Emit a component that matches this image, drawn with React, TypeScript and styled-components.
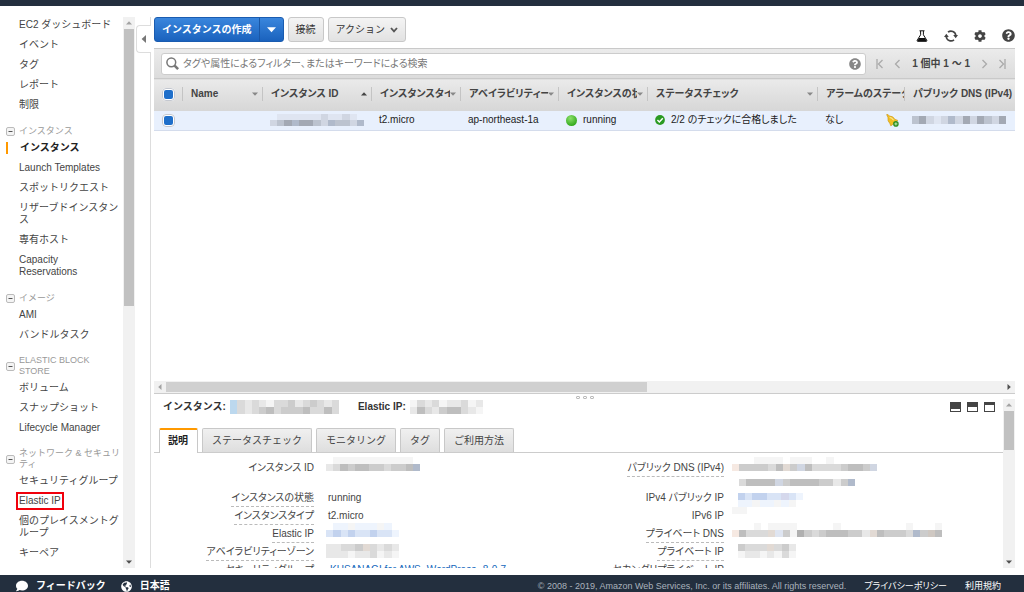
import React from "react";
import styled, { createGlobalStyle, css } from "styled-components";
import { FaCog, FaComment, FaGlobeAmericas, FaQuestionCircle } from "react-icons/fa";

const GlobalStyle = createGlobalStyle`
  *, *::before, *::after { box-sizing: border-box; }
  body {
    margin: 0;
    background: #fff;
    color: #444;
    font: 10px/12px "Liberation Sans", "Noto Sans CJK JP", sans-serif;
  }
  button, input { font: inherit; color: inherit; margin: 0; }
  button { padding: 0; background: none; border: 0; cursor: pointer; }
  a { color: inherit; text-decoration: none; }
  ul, dl, dd { margin: 0; padding: 0; list-style: none; }
  svg { display: block; flex: none; }
`;

const Page = styled.div`
  display: flex;
  flex-direction: column;
  height: 100vh;
  overflow: hidden;
`;
const TopBar = styled.header`
  flex: none;
  height: 6px;
  background: #232f3e;
`;
const Body = styled.div`
  flex: 1;
  min-height: 0;
  display: flex;
  padding: 11px 9px 7px 0;
`;

/* Scroll bars */
const Bar = styled.div<{ $row?: boolean }>`
  display: flex;
  flex: none;
  flex-direction: ${(p) => (p.$row ? "row" : "column")};
  ${(p) => (p.$row ? "height: 12px;" : "width: 12px;")}
  background: #f1f1f1;
`;
const BarArrow = styled.button`
  flex: none;
  width: 12px;
  height: 12px;
  display: grid;
  place-items: center;
`;
const BarPart = styled.div<{ $grow: number; $thumb?: boolean; $row?: boolean }>`
  flex: ${(p) => p.$grow} 1 0;
  ${(p) => p.$thumb && (p.$row ? "margin: 1px 0; background: #d0d0d0;" : "margin: 0 1px; background: #c1c1c1;")}
`;
const Triangle = ({ turn = 0, color = "#555", w = 6 }: { turn?: number; color?: string; w?: number }) => (
  <svg width={w} height={w} viewBox="0 0 6 6">
    <path d="M0 1.5h6L3 4.8z" fill={color} transform={`rotate(${turn} 3 3)`} />
  </svg>
);
const ScrollBar = ({ thumb, rest, row }: { thumb: number; rest: number; row?: boolean }) => (
  <Bar $row={row}>
    <BarArrow aria-label="前へ">
      <Triangle turn={row ? 90 : 180} color="#a3a3a3" />
    </BarArrow>
    <BarPart $grow={thumb} $thumb $row={row} />
    <BarPart $grow={rest} />
    <BarArrow aria-label="次へ">
      <Triangle turn={row ? -90 : 0} color="#505050" />
    </BarArrow>
  </Bar>
);

/* Side navigation */
const Side = styled.nav`
  flex: none;
  display: flex;
  width: 135px;
`;
const SideScroll = styled.div`
  flex: 1;
  overflow: hidden;
  padding-top: 2px;
`;
const NavList = styled.ul`
  display: flex;
  flex-direction: column;
  gap: 8px;
`;
const NavItem = styled.li<{ $active?: boolean }>`
  display: flex;
  padding-left: 19px;
  white-space: pre;
  ${(p) =>
    p.$active &&
    css`
      margin-left: 6px;
      padding-left: 12px;
      border-left: 2px solid #f90;
      font-weight: bold;
      color: #222;
    `}
`;
const NavLink = styled.a<{ $marked?: boolean }>`
  ${(p) => p.$marked && "outline: 2px solid #f0000c; outline-offset: 1px;"}
`;
const GroupHead = styled.button`
  display: flex;
  align-items: center;
  gap: 4px;
  min-height: 12px;
  margin: 14px 0 5px;
  padding-left: 6px;
  font-size: 9px;
  line-height: 11px;
  text-align: left;
  white-space: pre;
  color: #999;
`;
const Minus = () => (
  <svg width="9" height="9" viewBox="0 0 9 9">
    <rect x=".5" y=".5" width="8" height="8" rx="1.5" fill="#f4f4f4" stroke="#bbb" />
    <path d="M2.5 4.5h4" stroke="#555" />
  </svg>
);

type Group = { head?: string; items: string[] };
const groups: Group[] = [
  { items: ["EC2 ダッシュボード", "イベント", "タグ", "レポート", "制限"] },
  {
    head: "インスタンス",
    items: ["インスタンス", "Launch Templates", "スポットリクエスト", "リザーブドインスタン\nス", "専有ホスト", "Capacity\nReservations"],
  },
  { head: "イメージ", items: ["AMI", "バンドルタスク"] },
  { head: "ELASTIC BLOCK\nSTORE", items: ["ボリューム", "スナップショット", "Lifecycle Manager"] },
  {
    head: "ネットワーク & セキュリ\nティ",
    items: ["セキュリティグループ", "Elastic IP", "個のプレイスメントグ\nループ", "キーペア"],
  },
];

/* Handle that folds the side navigation */
const Fold = styled.div`
  flex: none;
  display: flex;
  flex-direction: column;
  width: 16px;
`;
const FoldLine = styled.div<{ $short?: boolean }>`
  flex: ${(p) => (p.$short ? "0 0 8px" : "1")};
  border-right: 1px solid #ddd;
`;
const FoldButton = styled.button`
  flex: none;
  height: 28px;
  margin-left: 1px;
  border: 1px solid #ddd;
  border-right: 0;
  border-radius: 4px 0 0 4px;
  display: grid;
  place-items: center;
`;

/* Main column */
const Main = styled.main`
  flex: 1;
  min-width: 0;
  display: flex;
  flex-direction: column;
  padding-left: 3px;
`;
const Toolbar = styled.div`
  flex: none;
  display: flex;
  align-items: flex-start;
  gap: 4px;
  height: 31px;
`;
const PrimaryGroup = styled.div`
  display: flex;
  height: 25px;
  border: 1px solid #1a5cb0;
  border-radius: 3px;
  background: linear-gradient(#3a86dd, #1a62bd);
`;
const PrimaryButton = styled.button`
  display: flex;
  align-items: center;
  padding: 0 7px;
  color: #fff;
  font-weight: bold;
  & + & {
    border-left: 1px solid #1a57a6;
  }
`;
const PlainButton = styled.button`
  display: flex;
  align-items: center;
  gap: 5px;
  height: 25px;
  padding: 0 7px;
  border: 1px solid #c8c8c8;
  border-radius: 3px;
  background: linear-gradient(#f4f4f4, #e2e2e2);
  color: #333;
`;
const Tools = styled.div`
  display: flex;
  align-items: center;
  gap: 16px;
  margin-left: auto;
  padding-top: 12px;
`;
const ToolButton = styled.button`
  display: grid;
  place-items: center;
  width: 13px;
  height: 13px;
  color: #444;
`;
const FilterBar = styled.div`
  flex: none;
  display: flex;
  align-items: center;
  height: 30px;
  padding: 0 9px 0 7px;
  border-top: 1px solid #c9c9c9;
  background: linear-gradient(#ebebeb, #dcdcdc);
`;
const SearchBox = styled.label`
  flex: 1;
  display: flex;
  align-items: center;
  gap: 4px;
  height: 22px;
  padding: 0 4px;
  border: 1px solid #ccc;
  border-radius: 3px;
  background: #fff;
  color: #888;
  input {
    flex: 1;
    min-width: 0;
    padding: 0;
    border: 0;
    outline: 0;
    font-feature-settings: "palt";
  }
  input::placeholder { color: #777; }
`;
const Pager = styled.div`
  display: flex;
  align-items: center;
  gap: 11px;
  margin-left: 10px;
  font-weight: bold;
  color: #444;
`;

const Table = styled.table`
  flex: none;
  width: 100%;
  table-layout: fixed;
  border-collapse: collapse;
  font-feature-settings: "palt";
  color: #222;
`;
const Col = styled.col<{ $w?: number }>`
  ${(p) => p.$w && `width: ${p.$w}px;`}
`;
const Th = styled.th`
  height: 32px;
  padding: 0 0 1px;
  border-top: 1px solid #c9c9c9;
  background: linear-gradient(#eaeaea, #d6d6d6);
  text-align: left;
  color: #444;
`;
const HeadCell = styled.div<{ $first?: boolean; $sorted?: boolean }>`
  display: flex;
  align-items: center;
  height: 14px;
  padding: 0 ${(p) => (p.$sorted ? "4px" : "0")} 0 8px;
  ${(p) => !p.$first && "border-left: 1px solid #c4c4c4;"}
`;
const HeadLabel = styled.span`
  flex: 1;
  overflow: hidden;
  white-space: nowrap;
`;
const Td = styled.td`
  height: 20px;
  padding: 0;
  border-bottom: 1px solid #d4dcec;
  background: #e8f0fd;
`;
const Cell = styled.div`
  display: flex;
  align-items: center;
  gap: 6px;
  padding-left: 8px;
  white-space: nowrap;
`;
const CellEnd = styled.span`
  margin-left: auto;
  padding-right: 5px;
`;
const Check = styled.input`
  appearance: none;
  display: block;
  width: 13px;
  height: 13px;
  border: 2px solid #fff;
  border-radius: 4px;
  outline: 1px solid #c4c8d0;
  outline-offset: -1px;
  background: #1f6fca;
`;
const Empty = styled.div`
  flex: 1;
`;

/* Lower pane */
const Pane = styled.section`
  flex: none;
  display: flex;
  flex-direction: column;
  height: 175px;
  border-top: 1px solid #ccc;
`;
const Grips = styled.div`
  flex: none;
  display: flex;
  justify-content: center;
  align-items: flex-end;
  gap: 3px;
  height: 5px;
  i {
    width: 4px;
    height: 3px;
    border: 1px solid #bbb;
    border-radius: 1px;
  }
`;
const PaneBody = styled.div`
  flex: 1;
  min-height: 0;
  display: flex;
`;
const PaneContent = styled.div`
  flex: 1;
  min-width: 0;
  overflow: hidden;
`;
const PaneHead = styled.div`
  display: flex;
  align-items: center;
  gap: 3px;
  height: 16px;
  margin-bottom: 13px;
  padding: 0 8px 0 9px;
  font-weight: bold;
  color: #333;
`;
const HeadGroup = styled.div`
  display: flex;
  align-items: center;
  gap: 4px;
  margin-right: 16px;
`;
const Views = styled.div`
  display: flex;
  gap: 6px;
  margin-left: auto;
`;
const Tabs = styled.div`
  display: flex;
  gap: 4px;
  height: 25px;
  padding-left: 5px;
  border-bottom: 1px solid #ccc;
`;
const Tab = styled.button<{ $active?: boolean }>`
  height: 24px;
  padding: 0 9px;
  border: 1px solid #c8c8c8;
  border-bottom: 0;
  border-radius: 2px 2px 0 0;
  background: linear-gradient(#f0f0f0, #dedede);
  color: #444;
  ${(p) =>
    p.$active &&
    css`
      height: 25px;
      padding: 0 9px 1px 8px;
      border-top: 2px solid #f90;
      background: #fff;
      font-weight: bold;
      color: #222;
    `}
`;
const Details = styled.div`
  display: grid;
  grid-template-columns: 1fr 1fr;
  padding: 6px 29px 0 0;
`;
const DetailList = styled.dl`
  display: grid;
  grid-template-columns: 160px 1fr;
  grid-template-rows: 30px;
  grid-auto-rows: 18px;
  column-gap: 14px;
  line-height: 17px;
  white-space: nowrap;
  font-feature-settings: "palt";
  dt { text-align: right; }
`;
const Term = styled.span<{ $hint?: boolean }>`
  display: inline-block;
  height: 18px;
  ${(p) => p.$hint && "border-bottom: 1px dashed #bbb;"}
`;
const TextLink = styled.a`
  padding-left: 2px;
  color: #16b;
`;
/* Obscured values hang out to the left of the value column and sit on its text lines */
const Stack = styled.div<{ $out?: number; $up?: number }>`
  display: flex;
  flex-direction: column;
  gap: 8px;
  margin: ${(p) => -(p.$up ?? 0)}px 0 0 ${(p) => -(p.$out ?? 0)}px;
`;
const Inset = styled.div`
  padding-left: 7px;
`;

const Footer = styled.footer`
  flex: none;
  display: flex;
  align-items: flex-start;
  height: 17px;
  padding: 5px 23px 0 16px;
  overflow: hidden;
  background: #232f3e;
  color: #fff;
`;
const FootLink = styled.a`
  display: flex;
  align-items: center;
  gap: 8px;
  margin-right: 15px;
  font-weight: bold;
`;
const Legal = styled.div`
  display: flex;
  gap: 18px;
  margin-left: auto;
  font-size: 9px;
  font-feature-settings: "palt";
  span { color: #aab2bc; }
`;

/* Pixelated values: each letter is one cell, "." is left open */
const shades: Record<string, string> = {
  a: "#f5f5f5", b: "#e8e8e8", c: "#dadada", d: "#cccccc", e: "#bebebe", f: "#b0b0b0",
  r: "#f6e9e2", s: "#e2dad4", t: "#cfc8c2",
  m: "#eef4fd", n: "#d9e4f6", o: "#c2d2ee", p: "#d5d8ec",
  u: "#d0d6e2", v: "#bcc3cf", w: "#a3a9b4", x: "#b0bacb", y: "#dfe5f1", z: "#4a8fd6", q: "#bcd8ee",
};
const Mosaic = ({ rows, tall = 7 }: { rows: string[]; tall?: number }) => {
  const cols = rows[0].length;
  return (
    <svg
      width={Math.round(cols * 7.25)}
      height={rows.length * tall}
      viewBox={`0 0 ${cols} ${rows.length}`}
      preserveAspectRatio="none"
      shapeRendering="crispEdges"
      aria-hidden
    >
      {rows.flatMap((row, y) =>
        [...row].map((c, x) => c !== "." && <rect key={`${x}-${y}`} x={x} y={y} width="1" height="1" fill={shades[c]} />)
      )}
    </svg>
  );
};

/* Icons */
const Flask = () => (
  <svg width="12" height="12" viewBox="0 0 12 12">
    <path d="M3.5 .8h5M4.6 1v3.8L1.2 10.3q-.3 1 .6 1h8.4q.9 0 .6-1L7.4 4.8V1" fill="none" stroke="#111" />
    <path d="M3 8h6l1.8 3.2H1.2z" fill="#111" />
  </svg>
);
const Refresh = () => (
  <svg width="14" height="12" viewBox="0 0 14 12">
    <path d="M4 2.2A4.8 4.8 0 0 1 11.8 5.5M10 9.8A4.8 4.8 0 0 1 2.2 6.5" fill="none" stroke="#444" strokeWidth="1.7" />
    <path d="M9.2 5h4.8l-2.3 3.2zM0 7h4.8L2.3 3.8z" fill="#444" />
  </svg>
);
const Magnifier = () => (
  <svg width="13" height="13" viewBox="0 0 13 13" fill="none" stroke="#777">
    <circle cx="5.3" cy="5.3" r="4.4" strokeWidth="1.5" />
    <path d="M8.6 8.6l3.5 3.5" strokeWidth="2.6" />
  </svg>
);
const PageArrow = ({ d }: { d: string }) => (
  <svg width="7" height="10" viewBox="0 0 7 10" fill="none" stroke="#aaa" strokeWidth="1.3">
    <path d={d} />
  </svg>
);
const Chevron = () => (
  <svg width="8" height="6" viewBox="0 0 8 6" fill="none" stroke="#555" strokeWidth="1.8">
    <path d="M1 1l3 3.4L7 1" />
  </svg>
);
const Running = () => (
  <svg width="11" height="11" viewBox="0 0 10 10">
    <defs>
      <radialGradient id="ball" cx=".4" cy=".3" r=".7">
        <stop offset="0" stopColor="#8be06a" />
        <stop offset="1" stopColor="#31a81c" />
      </radialGradient>
    </defs>
    <circle cx="5" cy="5" r="5" fill="url(#ball)" />
  </svg>
);
const Passed = () => (
  <svg width="10" height="10" viewBox="0 0 9 9">
    <circle cx="4.5" cy="4.5" r="4.4" fill="#2a9a22" />
    <path d="M2.2 4.6l1.7 1.7L7 2.9" fill="none" stroke="#fff" strokeWidth="1.3" />
  </svg>
);
const AlarmBell = () => (
  <svg width="13" height="13" viewBox="0 0 13 13">
    <path d="M.6 .6L2 .5 3.4 2Q7 1.9 8.8 5.2L11.8 6.4 4.8 11.9 3.8 9.4Q1.3 7 1.9 3.4z" fill="#f2bf22" stroke="#c9951a" strokeWidth=".6" />
    <path d="M3.6 3.4Q6 3.6 7.6 6.2" fill="none" stroke="#fbe48c" strokeWidth="1.2" />
    <circle cx="9.9" cy="9.9" r="2.8" fill="#2f8f22" />
    <path d="M9.9 8.4v3M8.4 9.9h3" stroke="#c9f0bd" strokeWidth=".9" />
  </svg>
);
const PaneView = ({ top }: { top: number }) => (
  <svg width="11" height="10" viewBox="0 0 11 10">
    <path d="M0 0h11v10H0z" fill="#444" />
    <path d={`M1 ${top}h9V9H1z`} fill="#fff" />
  </svg>
);

const columns: { label: string; w?: number; sort?: "up" | "down" }[] = [
  { label: "Name", w: 80, sort: "down" },
  { label: "インスタンス ID", w: 109, sort: "up" },
  { label: "インスタンスタイプ", w: 89, sort: "down" },
  { label: "アベイラビリティーゾーン", w: 98, sort: "down" },
  { label: "インスタンスの状態", w: 89, sort: "down" },
  { label: "ステータスチェック", w: 170, sort: "down" },
  { label: "アラームのステータス", w: 87 },
  { label: "パブリック DNS (IPv4)" },
];

type Detail = { term: string; hint?: boolean; value: React.ReactNode };
const leftDetails: Detail[] = [
  { term: "インスタンス ID", value: <Stack $out={2} $up={2}><Mosaic rows={[".aaaaaaaaaaa.", "bcedeeddcddex"]} /></Stack> },
  { term: "インスタンスの状態", hint: true, value: "running" },
  { term: "インスタンスタイプ", hint: true, value: "t2.micro" },
  { term: "Elastic IP", hint: true, value: <Stack $out={2} $up={2}><Mosaic rows={[".mmammmam.", "nononnonnm"]} /></Stack> },
  { term: "アベイラビリティーゾーン", hint: true, value: <Stack $out={2} $up={-1}><Mosaic rows={["bbccdscbcb", "bbbabbcaba"]} /></Stack> },
  { term: "セキュリティグループ", hint: true, value: <TextLink href="#sg">KUSANAGI for AWS -WordPress--8-0-7-</TextLink> },
];
const rightDetails: Detail[] = [
  {
    term: "パブリック DNS (IPv4)",
    hint: true,
    value: (
      <Stack $out={6} $up={2}>
        <Mosaic rows={["...aaaa.aaa..a......", "rddddcesdueccccdeedu"]} />
        <Inset>
          <Mosaic rows={["ceeeeudeeeeddbdx"]} />
        </Inset>
      </Stack>
    ),
  },
  { term: "IPv4 パブリック IP", value: <Stack $up={-4}><Mosaic rows={["onoonnpnm", "mmammama."]} /></Stack> },
  { term: "IPv6 IP", value: <Stack $out={6}><Mosaic rows={["aa"]} /></Stack> },
  {
    term: "プライベート DNS",
    hint: true,
    value: (
      <Stack $out={6} $up={2}>
        <Mosaic rows={["...a.aaaa.....a.........a...a", "recccsydafdcdeeeddbsedddcxdte"]} />
      </Stack>
    ),
  },
  { term: "プライベート IP", hint: true, value: <Stack $up={-1}><Mosaic rows={["dcccscdb", "abbabaca"]} /></Stack> },
  { term: "セカンダリプライベート IP", hint: true, value: "" },
];
const DetailColumn = ({ list }: { list: Detail[] }) => (
  <DetailList>
    {list.map((d) => (
      <React.Fragment key={d.term}>
        <dt>
          <Term $hint={d.hint}>{d.term}</Term>
        </dt>
        <dd>{d.value}</dd>
      </React.Fragment>
    ))}
  </DetailList>
);

export default function App() {
  return (
    <Page>
      <GlobalStyle />
      <TopBar />
      <Body>
        <Side>
          <SideScroll>
            {groups.map((g, i) => (
              <React.Fragment key={i}>
                {g.head && (
                  <GroupHead>
                    <Minus />
                    {g.head}
                  </GroupHead>
                )}
                <NavList>
                  {g.items.map((item) => (
                    <NavItem key={item} $active={item === "インスタンス"}>
                      <NavLink href="#nav" $marked={item === "Elastic IP"}>
                        {item}
                      </NavLink>
                    </NavItem>
                  ))}
                </NavList>
              </React.Fragment>
            ))}
          </SideScroll>
          <ScrollBar thumb={277} rest={250} />
        </Side>
        <Fold>
          <FoldLine $short />
          <FoldButton aria-label="折りたたむ">
            <Triangle turn={90} color="#777" w={8} />
          </FoldButton>
          <FoldLine />
        </Fold>
        <Main>
          <Toolbar>
            <PrimaryGroup>
              <PrimaryButton>インスタンスの作成</PrimaryButton>
              <PrimaryButton aria-label="その他の作成">
                <Triangle color="#fff" w={9} />
              </PrimaryButton>
            </PrimaryGroup>
            <PlainButton>接続</PlainButton>
            <PlainButton>
              アクション
              <Chevron />
            </PlainButton>
            <Tools>
              <ToolButton aria-label="実験"><Flask /></ToolButton>
              <ToolButton aria-label="更新"><Refresh /></ToolButton>
              <ToolButton aria-label="設定"><FaCog size={12} /></ToolButton>
              <ToolButton aria-label="ヘルプ"><FaQuestionCircle size={13} /></ToolButton>
            </Tools>
          </Toolbar>
          <FilterBar>
            <SearchBox>
              <Magnifier />
              <input placeholder="タグや属性によるフィルター、またはキーワードによる検索" />
              <FaQuestionCircle size={12} />
            </SearchBox>
            <Pager>
              <button aria-label="最初"><PageArrow d="M1 0v10M6.5 1L2.5 5l4 4" /></button>
              <button aria-label="前"><PageArrow d="M5.5 1L1.5 5l4 4" /></button>
              <span>1 個中 1 ～ 1</span>
              <button aria-label="次"><PageArrow d="M1.5 1l4 4-4 4" /></button>
              <button aria-label="最後"><PageArrow d="M6 0v10M.5 1l4 4-4 4" /></button>
            </Pager>
          </FilterBar>
          <Table>
            <colgroup>
              <Col $w={28} />
              {columns.map((c) => (
                <Col key={c.label} $w={c.w} />
              ))}
            </colgroup>
            <thead>
              <tr>
                <Th>
                  <HeadCell $first>
                    <Check type="checkbox" defaultChecked aria-label="すべて選択" />
                  </HeadCell>
                </Th>
                {columns.map((c) => (
                  <Th key={c.label}>
                    <HeadCell $sorted={!!c.sort}>
                      <HeadLabel>{c.label}</HeadLabel>
                      {c.sort && <Triangle turn={c.sort === "up" ? 180 : 0} color={c.sort === "up" ? "#444" : "#888"} />}
                    </HeadCell>
                  </Th>
                ))}
              </tr>
            </thead>
            <tbody>
              <tr>
                <Td>
                  <Cell>
                    <Check type="checkbox" defaultChecked aria-label="選択" />
                  </Cell>
                </Td>
                <Td />
                <Td><Cell><Mosaic rows={[".yyyyyyuyyuy.", "uvwxwwvuxvvux"]} tall={6} /></Cell></Td>
                <Td><Cell>t2.micro</Cell></Td>
                <Td><Cell>ap-northeast-1a</Cell></Td>
                <Td><Cell><Running />running</Cell></Td>
                <Td><Cell><Passed />2/2 のチェックに合格しました</Cell></Td>
                <Td>
                  <Cell>
                    なし
                    <CellEnd><AlarmBell /></CellEnd>
                  </Cell>
                </Td>
                <Td><Cell><Mosaic rows={["vwuyuxuwuwvuw"]} tall={8} /></Cell></Td>
              </tr>
            </tbody>
          </Table>
          <Empty />
          <ScrollBar row thumb={481} rest={356} />
          <Pane>
            <Grips><i /><i /><i /></Grips>
            <PaneBody>
              <PaneContent>
                <PaneHead>
                  <HeadGroup>
                    インスタンス:
                    <Mosaic rows={["qcbcbaccdbcdcbc", "qcbcdecdddeccec"]} />
                  </HeadGroup>
                  <HeadGroup>
                    Elastic IP:
                    <Mosaic rows={["acbcabbcab", "becbdeecba"]} />
                  </HeadGroup>
                  <Views>
                    <button aria-label="最小"><PaneView top={7} /></button>
                    <button aria-label="中"><PaneView top={5} /></button>
                    <button aria-label="最大"><PaneView top={3} /></button>
                  </Views>
                </PaneHead>
                <Tabs>
                  <Tab $active>説明</Tab>
                  <Tab>ステータスチェック</Tab>
                  <Tab>モニタリング</Tab>
                  <Tab>タグ</Tab>
                  <Tab>ご利用方法</Tab>
                </Tabs>
                <Details>
                  <DetailColumn list={leftDetails} />
                  <DetailColumn list={rightDetails} />
                </Details>
              </PaneContent>
              <ScrollBar thumb={40} rest={107} />
            </PaneBody>
          </Pane>
        </Main>
      </Body>
      <Footer>
        <FootLink href="#feedback">
          <FaComment size={12} />
          フィードバック
        </FootLink>
        <FootLink href="#language">
          <FaGlobeAmericas size={11} />
          日本語
        </FootLink>
        <Legal>
          <span>© 2008 - 2019, Amazon Web Services, Inc. or its affiliates. All rights reserved.</span>
          <a href="#privacy">プライバシーポリシー</a>
          <a href="#terms">利用規約</a>
        </Legal>
      </Footer>
    </Page>
  );
}
